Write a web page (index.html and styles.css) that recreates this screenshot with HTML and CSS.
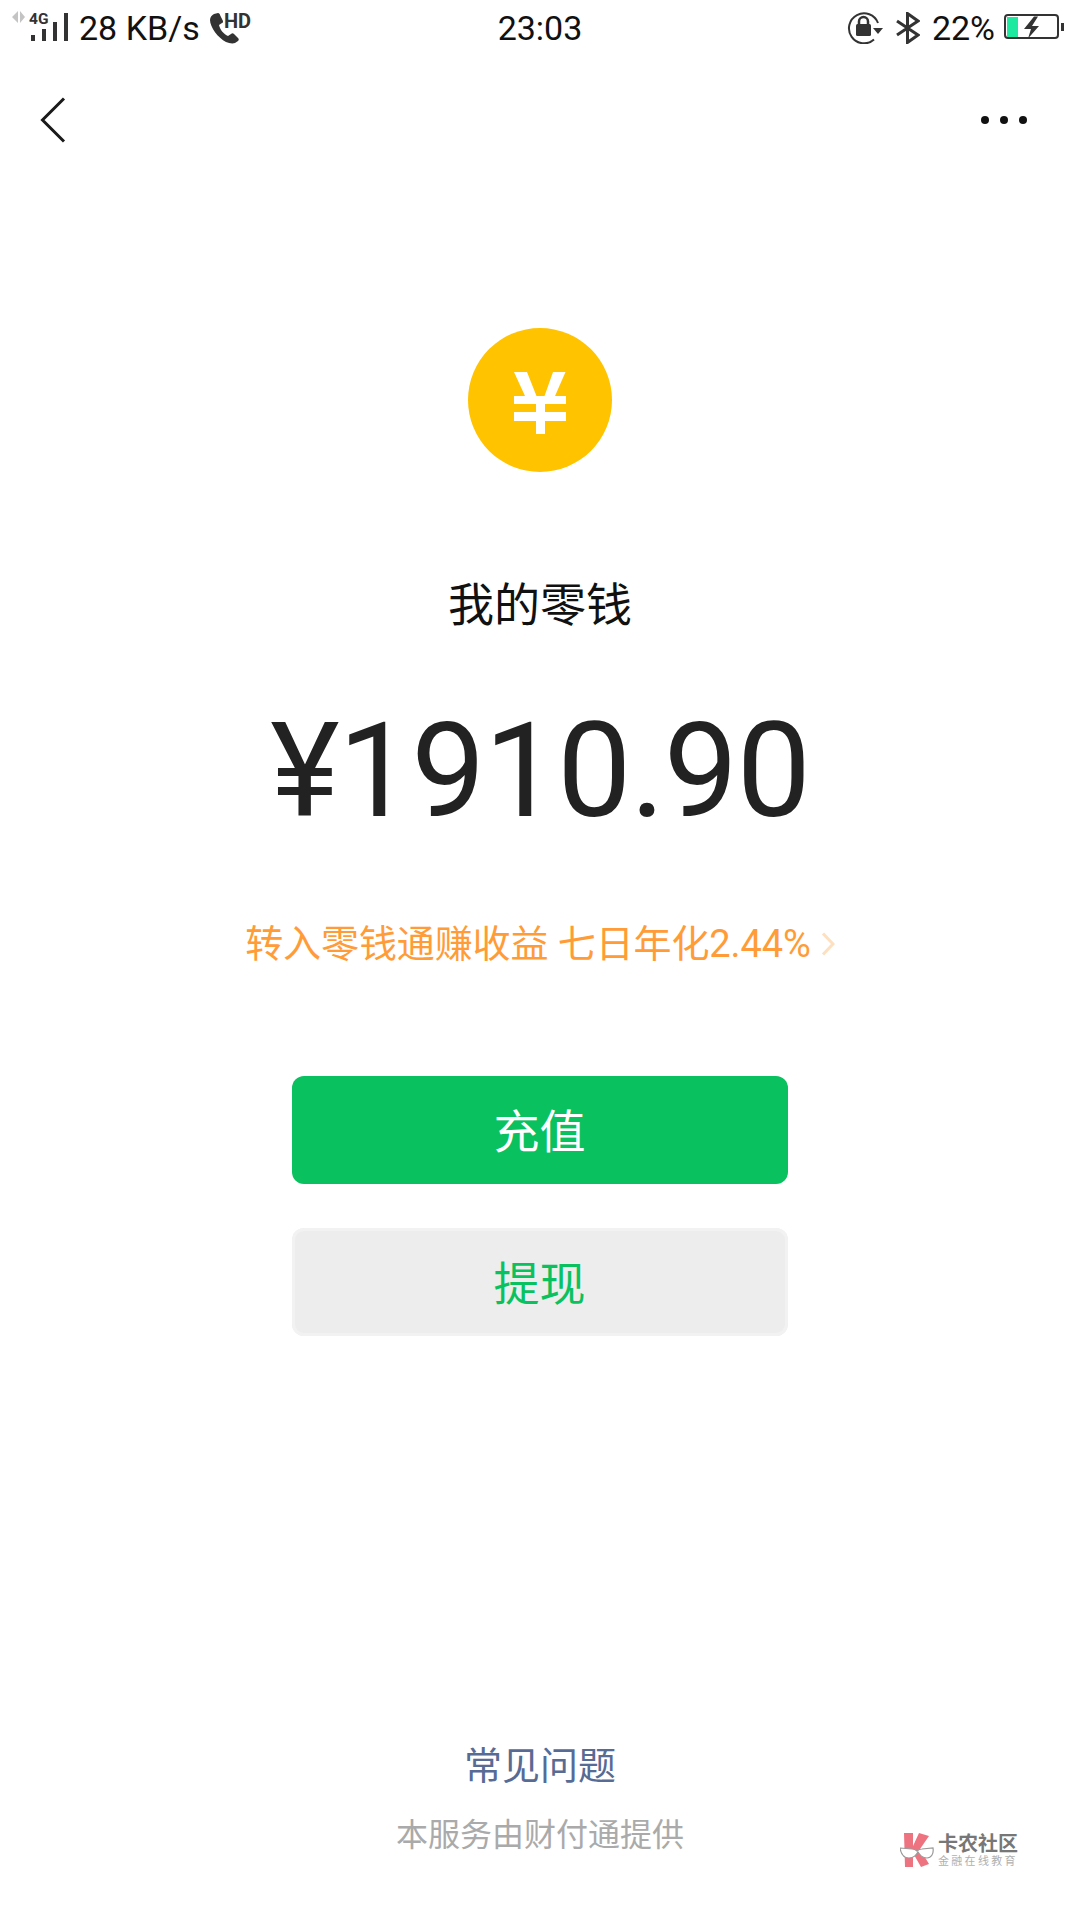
FILE: index.html
```html
<!DOCTYPE html>
<html lang="zh">
<head>
<meta charset="utf-8">
<title>我的零钱</title>
<link rel="stylesheet" href="styles.css">
</head>
<body>
<div class="page">
  <header class="status">
    <div class="status-side">
      <svg class="ic-signal" width="60" height="38" viewBox="0 -2 60 38">
        <path d="M6 0v12L0 6zM8 0v12l5-6z" fill="#c4c4c4"/>
        <text x="17" y="13" class="ic-4g">4G</text>
        <rect x="19" y="24" width="4" height="6" fill="#333"/>
        <rect x="30" y="18" width="4" height="12" fill="#333"/>
        <rect x="41" y="11" width="4" height="19" fill="#333"/>
        <rect x="52" y="2" width="4" height="28" fill="#333"/>
      </svg>
      <span class="speed">28 KB/s</span>
      <svg class="ic-call" width="44" height="38" viewBox="0 -3 44 38">
        <path d="M5 2l4-1c1 0 2 1 2 2l3 6c0 1 0 2-1 2l-3 2c1 5 5 9 9 11l3-2c1-1 2-1 3 0l4 4c1 1 1 2 0 3l-3 2c-3 1-6 0-9-1C9 26 1 15 1 8c0-3 2-5 4-6z" fill="#333"/>
        <text x="15" y="16" class="ic-hd">HD</text>
      </svg>
    </div>
    <span class="clock">23:03</span>
    <div class="status-side status-right">
      <svg class="ic-lock" width="36" height="32" viewBox="0 0 36 32">
        <path d="M27 27.500A15 15 0 1 1 31 11" fill="none" stroke="#333" stroke-width="2"/>
        <path d="M26 16h10l-5 6z" fill="#333"/>
        <rect x="9" y="12" width="15" height="12" rx="1.500" fill="#333"/>
        <path d="M12 13V9.500a4.500 4.500 0 0 1 9 0V13" fill="none" stroke="#333" stroke-width="2.500"/>
      </svg>
      <svg class="ic-bt" width="24" height="32" viewBox="0 0 24 32">
        <path d="M1 9l21 14-10.500 7.500V1.500L22 9 1 23" fill="none" stroke="#333" stroke-width="3"/>
      </svg>
      <span class="battery-text">22%</span>
      <svg class="ic-batt" width="60" height="28" viewBox="0 0 60 28">
        <rect x="1" y="1" width="53" height="23" rx="3" fill="none" stroke="#333" stroke-width="2"/>
        <rect x="3" y="3" width="11" height="20" fill="#1de9a0"/>
        <rect x="57" y="9" width="3" height="8" fill="#333"/>
        <path d="M30 2.500h4L28 12h7L24 24.500 27 15H20z" fill="#333"/>
      </svg>
    </div>
  </header>

  <nav class="nav">
    <svg class="ic-back" width="26" height="46" viewBox="0 0 26 46">
      <path d="M24 1.500L2.500 23 24 44.500" fill="none" stroke="#1a1a1a" stroke-width="3"/>
    </svg>
    <div class="more"><i></i><i></i><i></i></div>
  </nav>

  <main class="main">
    <svg class="coin" width="144" height="144" viewBox="0 0 144 144">
      <circle cx="72" cy="72" r="72" fill="#ffc300"/>
      <path d="M46 44H59L68.500 68H76.500L85 44H97.500L87 68H98V76H77V84H98V93H77V106H68V93H46V84H68V76H46V68H57Z" fill="#fff"/>
    </svg>
    <h1 class="title">我的零钱</h1>
    <div class="amount">¥1910.90</div>
    <a class="promo">转入零钱通赚收益 七日年化2.44%<svg class="promo-arrow" width="14" height="24" viewBox="0 0 14 24"><path d="M2 1.500L12 12 2 22.500" fill="none" stroke="#fde0bf" stroke-width="3"/></svg></a>
    <div class="btn btn-primary">充值</div>
    <div class="btn btn-secondary">提现</div>
  </main>

  <footer class="foot">
    <div class="faq">常见问题</div>
    <div class="provider">本服务由财付通提供</div>
  </footer>

  <div class="mark">
    <svg class="mark-logo" width="34" height="36" viewBox="0 0 34 36">
      <path d="M4 1h9v13l6-13 10 3-9 13 9 15-8 3-8-14v14H5z" fill="#ee7380"/>
      <path d="M0 16l12 1c3 0 4 1 5 2 1-1 2-2 5-2l11-1c1 6-2 10-6 10-5 0-7-3-9-6-2 3-4 6-9 6-5 0-8-4-9-10z" fill="#fff" stroke="#999" stroke-width="1.200"/>
    </svg>
    <div class="mark-text">
      <div class="mark-name">卡农社区</div>
      <div class="mark-sub">金融在线教育</div>
    </div>
  </div>
</div>
</body>
</html>
```
FILE: styles.css
```css
* { box-sizing: border-box; }
html, body { margin: 0; padding: 0; background: #fff; }
body { font-family: Roboto, "Noto Sans CJK SC", sans-serif; }
.page { position: relative; width: 1080px; height: 1920px; display: flex; flex-direction: column; overflow: hidden; background: #fff; }

.status { height: 56px; padding: 0 16px; display: grid; grid-template-columns: 1fr auto 1fr; align-items: center; color: #111; font-size: 34px; }
.status-side { display: flex; align-items: center; }
.status-right { justify-content: flex-end; }
.ic-signal { margin-left: -4px; }
.speed { margin-left: 7px; }
.ic-call { margin-left: 9px; }
.ic-4g { font: bold 15.500px Roboto, sans-serif; fill: #333; }
.ic-hd { font: bold 20px Roboto, sans-serif; fill: #333; }
.ic-bt { margin-left: 13px; }
.battery-text { margin-left: 12px; }
.ic-batt { margin-left: 9px; }

.nav { height: 64px; margin-top: 32px; padding: 0 53px 0 40px; display: flex; align-items: center; justify-content: space-between; }
.more { display: flex; gap: 11px; }
.more i { width: 8px; height: 8px; border-radius: 50%; background: #111; display: block; }

.main { display: flex; flex-direction: column; align-items: center; padding-top: 176px; }
.coin { display: block; }
.title { margin: 100px 0 0; font-size: 46px; line-height: 66px; font-weight: 400; color: #111; }
.amount { margin-top: 53px; font-size: 132px; line-height: 160px; color: #222; letter-spacing: -1.200px; }
.promo { margin-top: 66px; font-size: 38px; line-height: 54px; color: #ff9c38; letter-spacing: -0.100px; display: flex; align-items: center; }
.promo-arrow { margin-left: 10px; }
.btn { width: 496px; height: 108px; margin-right: 1px; padding-bottom: 4px; border-radius: 12px; display: flex; align-items: center; justify-content: center; font-size: 46px; }
.btn-primary { margin-top: 105px; background: #09c25f; color: #fff; }
.btn-secondary { margin-top: 44px; background: #ededed; color: #09c25f; box-shadow: inset 0 0 0 3px #f2f2f2; }

.foot { margin-top: auto; padding-bottom: 60px; display: flex; flex-direction: column; align-items: center; }
.faq { font-size: 38px; line-height: 54px; color: #576b95; }
.provider { margin-top: 17px; font-size: 32px; line-height: 50px; color: #aaa; }

.mark { position: absolute; left: 900px; top: 1832px; display: flex; align-items: center; gap: 4px; }
.mark-logo { display: block; }
.mark-name { font-size: 20px; line-height: 22px; font-weight: 700; color: #777; }
.mark-sub { font-size: 11px; line-height: 13px; color: #b0b0b0; letter-spacing: 2.300px; white-space: nowrap; }
```
